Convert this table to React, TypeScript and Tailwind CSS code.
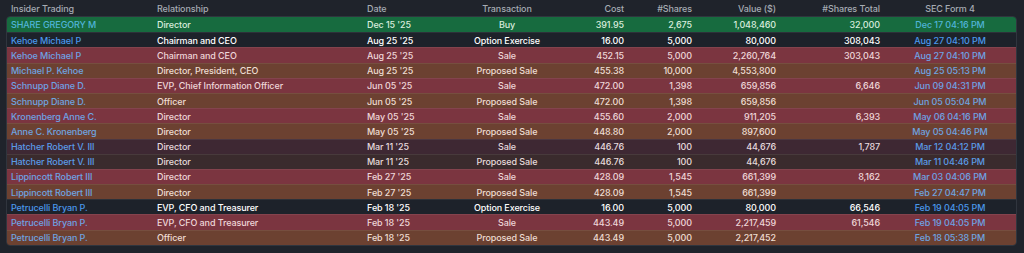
import React from 'react';

type Tone = 'buy' | 'plain' | 'sale' | 'proposed' | 'saleDim' | 'proposedDim';

type Trade = {
  name: string;
  relationship: string;
  date: string;
  transaction: string;
  cost: string;
  shares: string;
  value: string;
  total: string;
  filed: string;
  tone: Tone;
};

const trades: Trade[] = [
  { name: 'SHARE GREGORY M', relationship: 'Director', date: "Dec 15 '25", transaction: 'Buy', cost: '391.95', shares: '2,675', value: '1,048,460', total: '32,000', filed: 'Dec 17 04:16 PM', tone: 'buy' },
  { name: 'Kehoe Michael P', relationship: 'Chairman and CEO', date: "Aug 25 '25", transaction: 'Option Exercise', cost: '16.00', shares: '5,000', value: '80,000', total: '308,043', filed: 'Aug 27 04:10 PM', tone: 'plain' },
  { name: 'Kehoe Michael P', relationship: 'Chairman and CEO', date: "Aug 25 '25", transaction: 'Sale', cost: '452.15', shares: '5,000', value: '2,260,764', total: '303,043', filed: 'Aug 27 04:10 PM', tone: 'sale' },
  { name: 'Michael P. Kehoe', relationship: 'Director, President, CEO', date: "Aug 25 '25", transaction: 'Proposed Sale', cost: '455.38', shares: '10,000', value: '4,553,800', total: '', filed: 'Aug 25 05:13 PM', tone: 'proposed' },
  { name: 'Schnupp Diane D.', relationship: 'EVP, Chief Information Officer', date: "Jun 05 '25", transaction: 'Sale', cost: '472.00', shares: '1,398', value: '659,856', total: '6,646', filed: 'Jun 09 04:31 PM', tone: 'sale' },
  { name: 'Schnupp Diane D.', relationship: 'Officer', date: "Jun 05 '25", transaction: 'Proposed Sale', cost: '472.00', shares: '1,398', value: '659,856', total: '', filed: 'Jun 05 05:04 PM', tone: 'proposed' },
  { name: 'Kronenberg Anne C.', relationship: 'Director', date: "May 05 '25", transaction: 'Sale', cost: '455.60', shares: '2,000', value: '911,205', total: '6,393', filed: 'May 06 04:16 PM', tone: 'sale' },
  { name: 'Anne C. Kronenberg', relationship: 'Director', date: "May 05 '25", transaction: 'Proposed Sale', cost: '448.80', shares: '2,000', value: '897,600', total: '', filed: 'May 05 04:46 PM', tone: 'proposed' },
  { name: 'Hatcher Robert V. III', relationship: 'Director', date: "Mar 11 '25", transaction: 'Sale', cost: '446.76', shares: '100', value: '44,676', total: '1,787', filed: 'Mar 12 04:12 PM', tone: 'saleDim' },
  { name: 'Hatcher Robert V. III', relationship: 'Director', date: "Mar 11 '25", transaction: 'Proposed Sale', cost: '446.76', shares: '100', value: '44,676', total: '', filed: 'Mar 11 04:46 PM', tone: 'proposedDim' },
  { name: 'Lippincott Robert III', relationship: 'Director', date: "Feb 27 '25", transaction: 'Sale', cost: '428.09', shares: '1,545', value: '661,399', total: '8,162', filed: 'Mar 03 04:06 PM', tone: 'sale' },
  { name: 'Lippincott Robert III', relationship: 'Director', date: "Feb 27 '25", transaction: 'Proposed Sale', cost: '428.09', shares: '1,545', value: '661,399', total: '', filed: 'Feb 27 04:47 PM', tone: 'proposed' },
  { name: 'Petrucelli Bryan P.', relationship: 'EVP, CFO and Treasurer', date: "Feb 18 '25", transaction: 'Option Exercise', cost: '16.00', shares: '5,000', value: '80,000', total: '66,546', filed: 'Feb 19 04:05 PM', tone: 'plain' },
  { name: 'Petrucelli Bryan P.', relationship: 'EVP, CFO and Treasurer', date: "Feb 18 '25", transaction: 'Sale', cost: '443.49', shares: '5,000', value: '2,217,459', total: '61,546', filed: 'Feb 19 04:05 PM', tone: 'sale' },
  { name: 'Petrucelli Bryan P.', relationship: 'Officer', date: "Feb 18 '25", transaction: 'Proposed Sale', cost: '443.49', shares: '5,000', value: '2,217,452', total: '', filed: 'Feb 18 05:38 PM', tone: 'proposed' },
];

// row background + body text colour, by kind of trade
const toneRow: Record<Tone, string> = {
  buy: 'bg-[#176b3f] text-[#d8ecdd]',
  plain: 'bg-[#1d222a] text-white',
  sale: 'bg-[#7b3540] text-[#eed6d8]',
  proposed: 'bg-[#6c4131] text-[#eeddd2]',
  saleDim: 'bg-[#3e2833] text-[#e6d9de]',
  proposedDim: 'bg-[#3a2b2d] text-[#e6dbdb]',
};

const toneLink: Record<Tone, string> = {
  buy: 'text-[#50b4d8]',
  plain: 'text-[#4a98ec]',
  sale: 'text-[#6ea2e4]',
  proposed: 'text-[#6ea4e0]',
  saleDim: 'text-[#5a9be8]',
  proposedDim: 'text-[#5a9be6]',
};

const cols = 'grid grid-cols-[146px_210px_77px_134px_54px_68px_84px_104px_132px]';

export default function App() {
  return (
    <div className="w-[1024px] h-[253px] bg-[#1f232b] pl-[6px] pr-[7px] font-['Inter','Liberation_Sans',sans-serif] text-[9px] font-medium tracking-[-0.1px] leading-none overflow-hidden">
      <div className={`${cols} h-[16px] items-center px-[1px] text-[#a6abb3]`}>
        <div className="pl-1">Insider Trading</div>
        <div className="pl-1">Relationship</div>
        <div className="pl-1">Date</div>
        <div className="text-center">Transaction</div>
        <div className="text-right pr-1">Cost</div>
        <div className="text-right pr-1">#Shares</div>
        <div className="text-right pr-1">Value ($)</div>
        <div className="text-right pr-1">#Shares Total</div>
        <div className="text-center">SEC Form 4</div>
      </div>
      <div className="rounded-[4px] border border-[#30353e] bg-[#1a1e25] overflow-hidden">
        {trades.map((t, i) => (
          <div
            key={i}
            className={`${cols} h-[15.2px] items-center ${toneRow[t.tone]} ${i > 0 ? 'border-t border-white/[0.07]' : ''}`}
          >
            <div className={`pl-1 whitespace-nowrap ${toneLink[t.tone]}`}>{t.name}</div>
            <div className="pl-1 whitespace-nowrap">{t.relationship}</div>
            <div className="pl-1">{t.date}</div>
            <div className="text-center">{t.transaction}</div>
            <div className="text-right pr-1">{t.cost}</div>
            <div className="text-right pr-1">{t.shares}</div>
            <div className="text-right pr-1">{t.value}</div>
            <div className="text-right pr-1">{t.total}</div>
            <div className={`text-center ${toneLink[t.tone]}`}>{t.filed}</div>
          </div>
        ))}
      </div>
    </div>
  );
}
